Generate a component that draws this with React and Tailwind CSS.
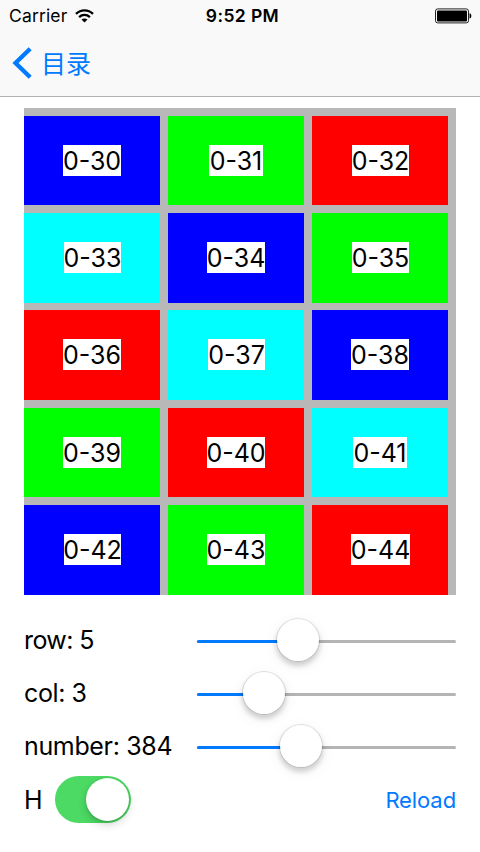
const BLUE = 'bg-[#0000ff]';
const GREEN = 'bg-[#00ff00]';
const RED = 'bg-[#ff0000]';
const CYAN = 'bg-[#00ffff]';

const rows = [
  { height: 'h-[89px]', gap: 'mb-[8px]', cells: [
    { text: '0-30', color: BLUE, box: 'ml-[39px] w-[58px]' },
    { text: '0-31', color: GREEN, box: 'ml-[41px] w-[54px]' },
    { text: '0-32', color: RED, box: 'ml-[40px] w-[57px]' },
  ] },
  { height: 'h-[90px]', gap: 'mb-[7px]', cells: [
    { text: '0-33', color: CYAN, box: 'ml-[40px] w-[57px]' },
    { text: '0-34', color: BLUE, box: 'ml-[39px] w-[58px]' },
    { text: '0-35', color: GREEN, box: 'ml-[40px] w-[57px]' },
  ] },
  { height: 'h-[90px]', gap: 'mb-[8px]', cells: [
    { text: '0-36', color: RED, box: 'ml-[39px] w-[58px]' },
    { text: '0-37', color: CYAN, box: 'ml-[40px] w-[57px]' },
    { text: '0-38', color: BLUE, box: 'ml-[39px] w-[58px]' },
  ] },
  { height: 'h-[89px]', gap: 'mb-[8px]', cells: [
    { text: '0-39', color: GREEN, box: 'ml-[39px] w-[58px]' },
    { text: '0-40', color: RED, box: 'ml-[39px] w-[58px]' },
    { text: '0-41', color: CYAN, box: 'ml-[41px] w-[54px]' },
  ] },
  { height: 'h-[90px]', gap: '', cells: [
    { text: '0-42', color: BLUE, box: 'ml-[40px] w-[57px]' },
    { text: '0-43', color: GREEN, box: 'ml-[39px] w-[58px]' },
    { text: '0-44', color: RED, box: 'ml-[39px] w-[59px]' },
  ] },
];

function StatusBar() {
  return (
    <div className="grid h-[31px] grid-cols-3 items-center pl-[9px] pr-[8px] text-black">
      <div className="flex items-center gap-[8px]">
        <span className="text-[17.5px] leading-[31px] tracking-[0.15px]">Carrier</span>
        <svg width="19" height="14" viewBox="0 0 19 14" fill="none" stroke="#000" strokeWidth="2.3">
          <path d="M1 4.9C5.8.2 13.2.2 18 4.9" />
          <path d="M4.1 8.1c3.1-2.9 7.7-2.9 10.8 0" />
          <path d="M9.5 13.6 6.5 10.5c1.7-1.4 4.3-1.4 6 0z" fill="#000" stroke="none" />
        </svg>
      </div>
      <span className="pl-[4px] text-center text-[17.5px] font-semibold leading-[31px] tracking-[0.4px]">9:52 PM</span>
      <svg className="justify-self-end" width="37" height="16" viewBox="0 0 37 16">
        <rect x=".5" y=".9" width="33" height="14" rx="2.2" fill="none" stroke="#222" />
        <rect x="2" y="2.4" width="30" height="11" rx="1" fill="#000" />
        <path d="M34.8 5.5c1.7.5 1.7 4.3 0 4.8z" fill="#000" stroke="#000" strokeWidth=".5" />
      </svg>
    </div>
  );
}

function Slider({ label, fill, labelClass }) {
  return (
    <div className="flex h-[53px] items-center">
      <span className={`w-[173px] shrink-0 whitespace-nowrap pb-[3px] text-[25px] leading-[30px] ${labelClass}`}>{label}</span>
      <div className="relative h-[3px] w-[259px] rounded-full bg-[#b4b4b4]">
        <div className="h-full rounded-full bg-[#007aff]" style={{ width: fill }} />
        <div
          className="absolute top-[-22px] size-[44px] -translate-x-1/2 rounded-full border border-black/10 bg-white bg-clip-padding shadow-[0_4px_5px_rgba(0,0,0,0.16),0_4px_16px_rgba(0,0,0,0.06)]"
          style={{ left: fill }}
        />
      </div>
    </div>
  );
}

export default function App() {
  return (
    <div className="h-[852px] w-[480px] overflow-hidden bg-white font-['Inter','Noto_Sans_CJK_SC',sans-serif] text-black">
      <header className="h-[97px] border-b border-[#b2b2b2] bg-[#f9f9f9]">
        <StatusBar />
        <button className="flex h-[64px] items-center gap-[9px] pl-[12px] text-[#007aff]">
          <svg width="20" height="32" viewBox="0 0 20 32" fill="none" stroke="#007aff" strokeWidth="4.3">
            <path d="M18.2 1.8 3.5 16l14.7 14.2" />
          </svg>
          <span className="pb-[3px] font-['Noto_Sans_CJK_SC',sans-serif] text-[25px] font-normal leading-[36px]">目录</span>
        </button>
      </header>

      <section className="ml-[24px] mt-[11px] h-[487px] w-[432px] bg-[#b8b8b8] pt-[8px]">
        {rows.map((row) => (
          <div key={row.cells[0].text} className={`flex gap-[8px] ${row.height} ${row.gap}`}>
            {row.cells.map((cell) => (
              <div key={cell.text} className={`flex w-[136px] items-start pt-[29px] ${cell.color}`}>
                <span className={`flex h-[31px] items-start justify-center whitespace-nowrap bg-white text-[25px] leading-[33px] ${cell.box}`}>
                  {cell.text}
                </span>
              </div>
            ))}
          </div>
        ))}
      </section>

      <section className="mt-[20px] px-[24px]">
        <Slider label="row: 5" fill="101px" labelClass="tracking-[-0.6px]" />
        <Slider label="col: 3" fill="67px" labelClass="tracking-[-0.4px]" />
        <Slider label="number: 384" fill="104px" labelClass="tracking-[-0.35px]" />
        <div className="flex h-[51px] items-center">
          <span className="w-[31px] text-[25px] leading-[30px]">H</span>
          <div className="flex h-[47px] w-[76px] items-center justify-end rounded-full bg-[#4cd964] pr-[2px]">
            <div className="size-[43px] rounded-full bg-white shadow-[0_4px_8px_rgba(0,0,0,0.16),0_1px_3px_rgba(0,0,0,0.15)]" />
          </div>
          <button className="ml-auto text-[22px] leading-[30px] tracking-[-0.1px] text-[#007aff]">Reload</button>
        </div>
      </section>
    </div>
  );
}
